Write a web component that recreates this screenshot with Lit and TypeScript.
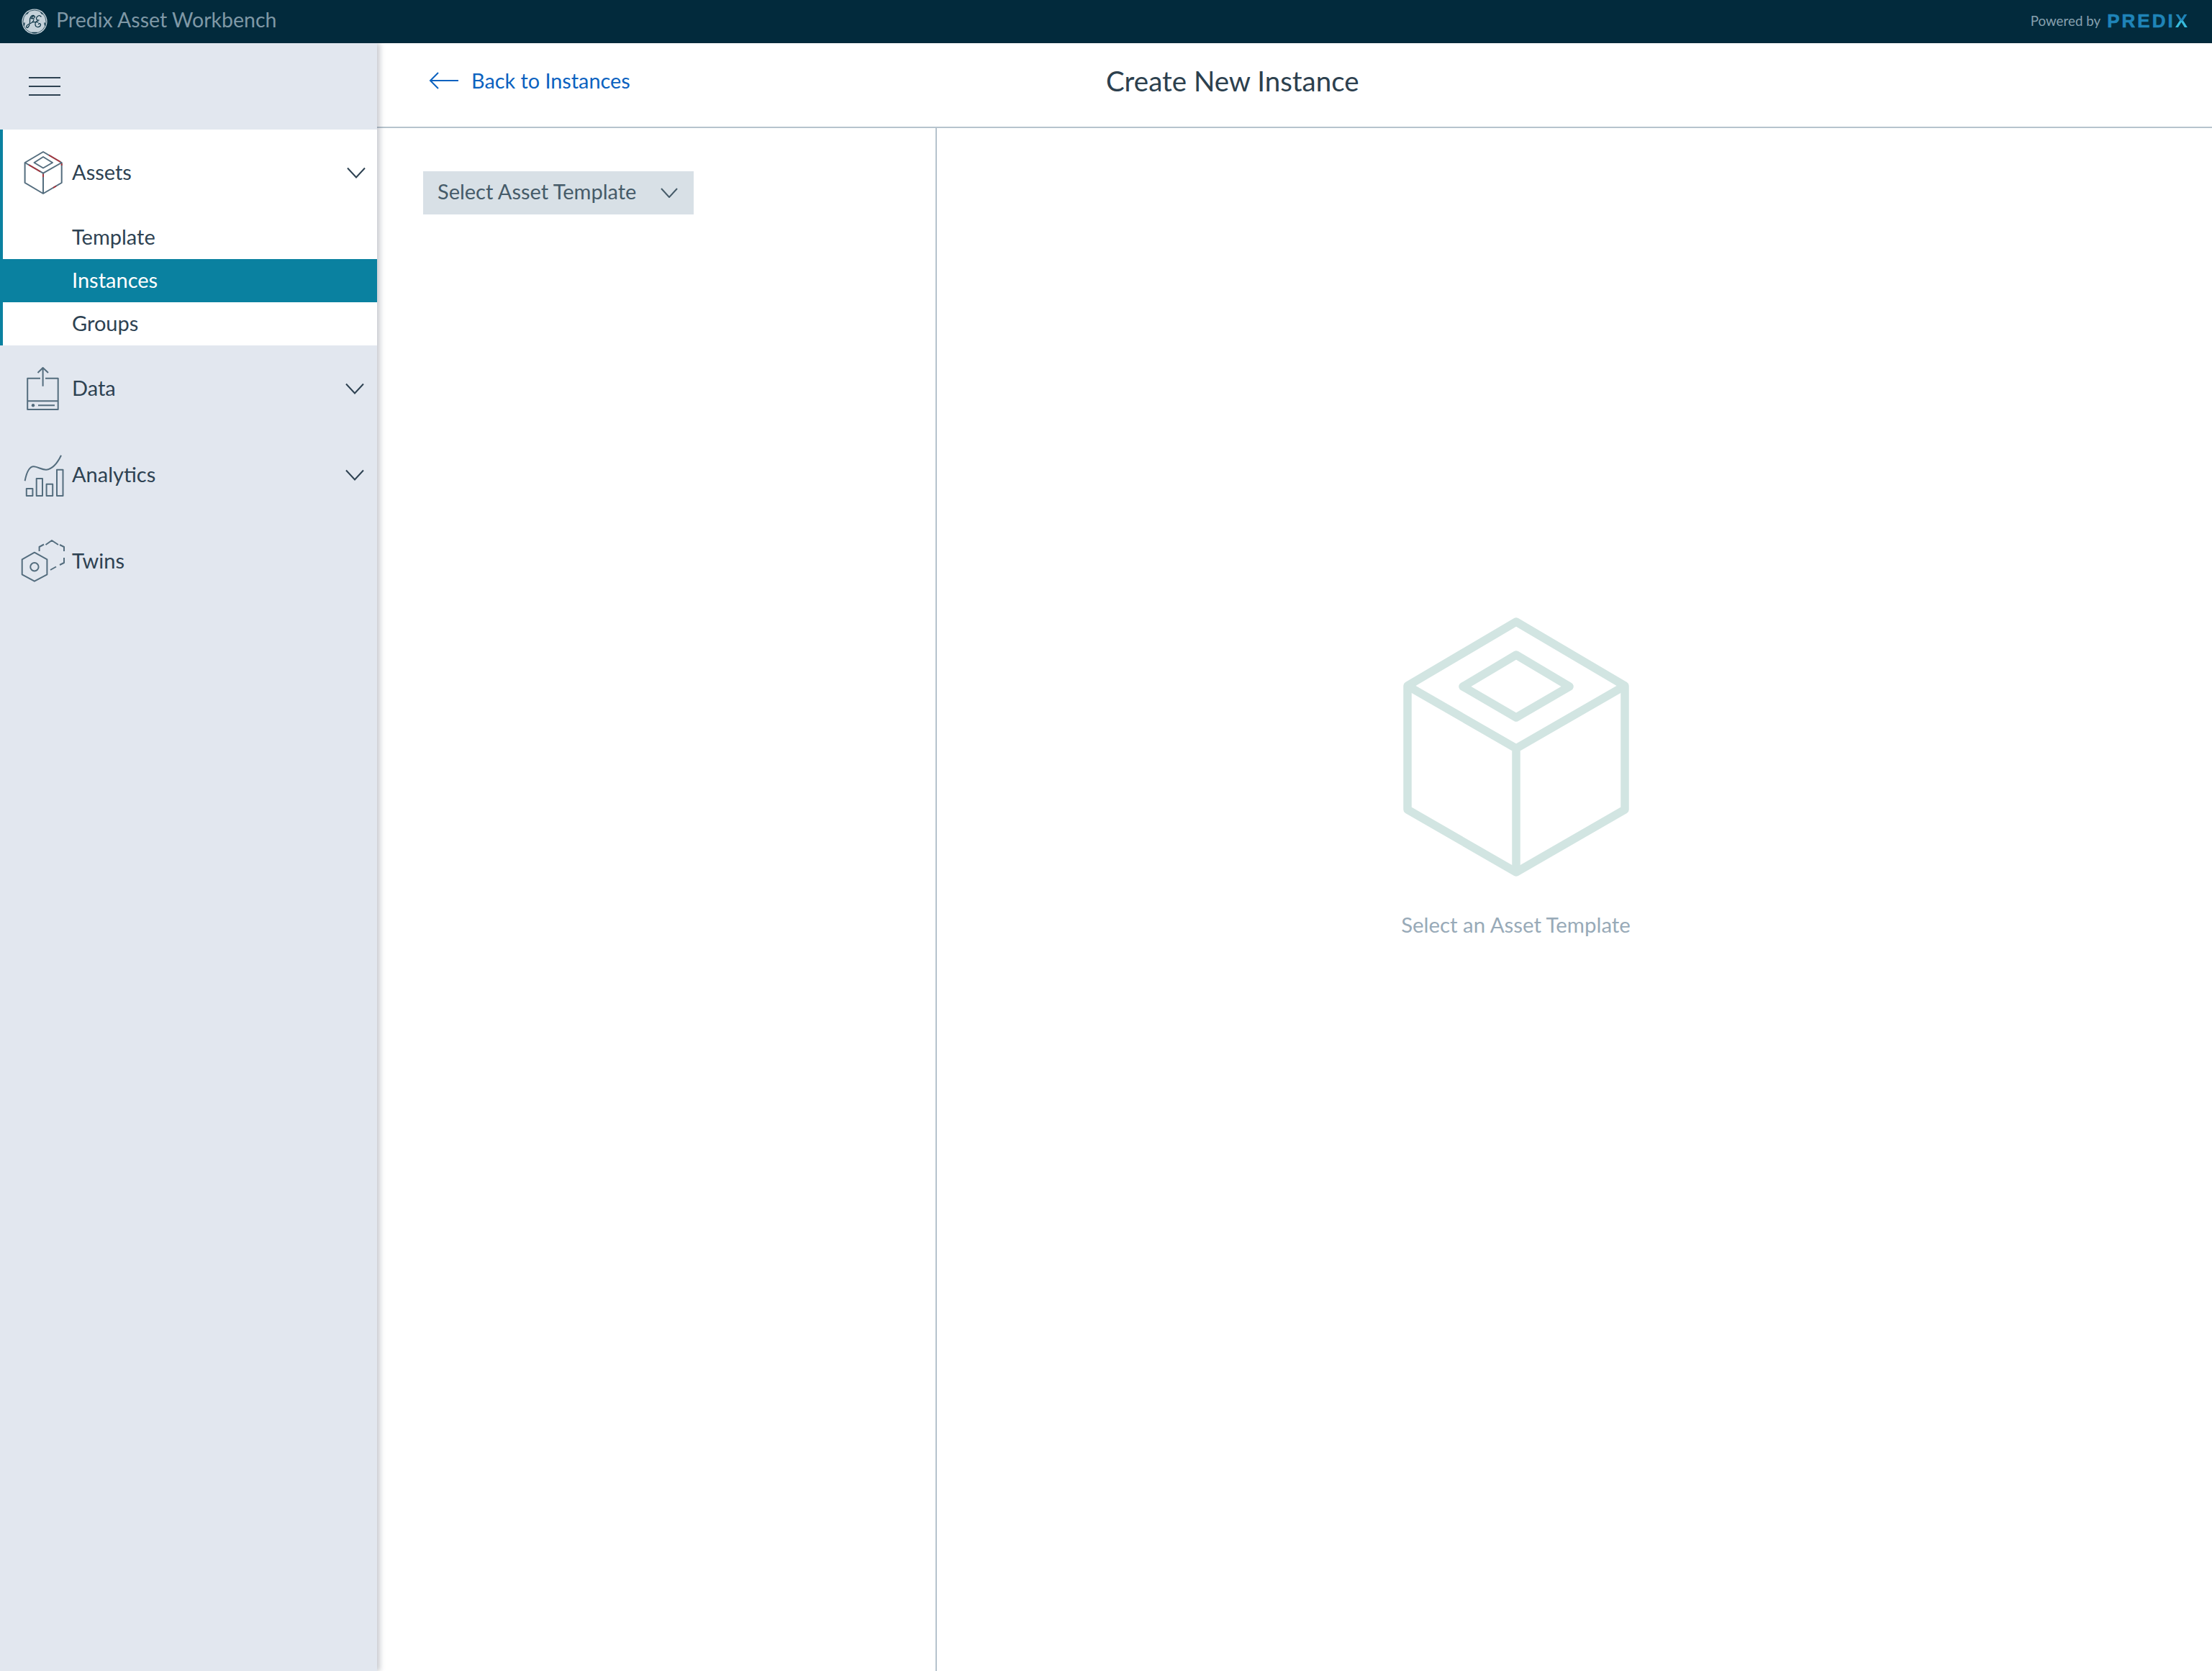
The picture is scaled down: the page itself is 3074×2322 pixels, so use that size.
import { LitElement, html, css, svg } from 'lit';
import { customElement } from 'lit/decorators.js';

const chevron = html`<svg class="chev" viewBox="0 0 26 16"><path d="M1 1.5 13 14.5 25 1.5"/></svg>`;

const assetsIcon = html`<svg class="nav-icon" viewBox="28 208 66 64">
  <g class="ln">
    <path d="M60 211 85.7 226V254L60 269 34.6 254V226Z"/>
    <path d="M34.6 226 60 240.7 85.7 226M60 240.7V269"/>
    <path d="M60 218 73 226 60 233.5 47.5 226Z"/>
  </g>
  <g class="red">
    <path d="M68 215.5 84 225M85.7 227V230M40 229 56 238.5M60 241.7V246M78 258.500 74 261"/>
  </g>
</svg>`;

const dataIcon = html`<svg class="nav-icon" viewBox="28 508 66 64">
  <g class="ln">
    <path d="M56 525.7H38.2V569H80.7V525.7H63M38.2 557.3H80.7M59.6 536.7V511M52.5 518 59.6 511 67 518M53 563.3H76"/>
    <circle class="dot" cx="46" cy="563.3" r="2.2"/>
  </g>
</svg>`;

const analyticsIcon = html`<svg class="nav-icon" viewBox="28 628 66 64">
  <g class="ln">
    <path d="M34.6 668.3C37 656 41 648 47 648.3 53 648.6 58 653 64.3 652.7 72 652 79 645 85 632.7"/>
    <path d="M36.8 679H45.4V689H36.8ZM50.7 665H59V689H50.7ZM64.6 672.7H73.2V689H64.6ZM79 652.7H87.5V689H79Z"/>
  </g>
</svg>`;

const twinsIcon = html`<svg class="nav-icon" viewBox="28 748 66 64">
  <g class="ln">
    <path d="M47.9 767.7 65.4 777.3V798.3L47.9 807.7 30.7 798.3V777.3Z"/>
    <circle cx="47.9" cy="787.7" r="5.7"/>
    <path d="M63.5 757 72 751 81 757M54.6 766V760L61 756.5M83 757 89 760V766M89 775V782L83 785M78 787.5 70 792"/>
  </g>
</svg>`;

// rough hand drawn GE monogram, logo only
const geLogo = svg`<circle cx="18" cy="18" r="17.6" fill="#c5d2da"/>
  <circle cx="18" cy="18" r="16" fill="none" stroke="#022a3c" stroke-width=".7"/>
  <g fill="none" stroke="#0b3345" stroke-width="1.25" stroke-linecap="round">
    <path d="M17 9.5C13.5 8.5 11 13 11.5 17 12 21 10 26.5 7.5 26.5 5.5 26 7 22.5 10 21.5 13 20.5 16.5 18 17 15"/>
    <path d="M14 12.5C15.5 10.5 17.5 9.5 18.5 11 19 13 15 14.5 13 13.5"/>
    <path d="M27 11C25 8.5 21 10 20.5 13.5 20.3 15.5 22.5 16.5 24.5 16 21 16.5 18.5 19 19 22.5 19.5 26 24 26.5 26 24 27.5 21.5 25 19.5 23.5 21.5"/>
    <path d="M15 18.5H23"/>
  </g>
  <g stroke="#0b3345" stroke-width="1.4" stroke-linecap="round">
    <path d="M9 5.5 7 7.5M27 5.5 29 7.5M4 20 3.5 23M32 20 32.5 23M15 33.5H21"/>
  </g>`;

@customElement('app-root')
export class AppRoot extends LitElement {
  static styles = css`
    :host {
      display: flex;
      flex-direction: column;
      height: 100vh;
      overflow: hidden;
      background: #fff;
      color: #2e4252;
      font-family: 'Lato', 'Noto Sans', sans-serif;
      font-size: 29px;
    }

    .topbar {
      flex: none;
      height: 60px;
      display: flex;
      align-items: center;
      padding: 0 34px 0 30px;
      background: #022a3c;
      position: relative;
      z-index: 2;
    }
    .ge {
      width: 36px;
      height: 36px;
      margin-right: 12px;
    }
    .app-name {
      font-size: 28.5px;
      color: #7f98a6;
      padding-bottom: 7px;
    }
    .powered {
      margin-left: auto;
      display: flex;
      align-items: center;
      gap: 9px;
      font-size: 18.8px;
      color: #86a0ae;
      padding-bottom: 1px;
    }
    .powered > span:first-child {
      padding-bottom: 2px;
    }
    .predix {
      font-family: 'Liberation Sans', sans-serif;
      font-weight: 700;
      font-size: 26px;
      letter-spacing: 3px;
      color: #1f84b8;
      -webkit-text-stroke: 0.6px #1f84b8;
    }
    .predix .x {
      letter-spacing: 0;
      background: linear-gradient(#1f84b8 45%, #38bcdc 55%);
      -webkit-background-clip: text;
      background-clip: text;
      color: transparent;
      -webkit-text-stroke: 0;
    }

    .body {
      flex: 1;
      display: flex;
      min-height: 0;
    }

    .sidebar {
      flex: none;
      width: 524px;
      background: #e2e7ef;
      box-shadow: 4px 0 7px rgba(60, 70, 85, 0.28);
      position: relative;
      z-index: 1;
    }
    .burger {
      height: 120px;
      display: flex;
      flex-direction: column;
      justify-content: center;
      gap: 10px;
      padding-left: 40px;
    }
    .burger span {
      width: 44px;
      height: 2px;
      background: #2e4252;
    }
    .group.open {
      background: #fff;
      border-left: 4px solid #0a81a0;
    }
    .group.open .nav {
      padding-left: 24px;
      padding-right: 16px;
    }
    .nav {
      height: 120px;
      display: flex;
      align-items: center;
      padding: 0 18px 0 28px;
    }
    .nav > span {
      padding-bottom: 4px;
    }
    .nav-icon {
      width: 66px;
      height: 64px;
      margin-right: 6px;
      overflow: visible;
      flex: none;
    }
    .ln {
      fill: none;
      stroke: #546d7e;
      stroke-width: 2;
      stroke-linejoin: round;
    }
    .ln .dot {
      fill: #546d7e;
      stroke: none;
    }
    .red {
      fill: none;
      stroke: #a9343c;
      stroke-width: 1.8;
    }
    .chev {
      width: 26px;
      height: 16px;
      margin-left: auto;
      fill: none;
      stroke: #2e4252;
      stroke-width: 2;
    }
    .sub {
      height: 60px;
      box-sizing: border-box;
      display: flex;
      align-items: center;
      padding: 0 0 4px 96px;
    }
    .sub.active {
      margin-left: -4px;
      padding-left: 100px;
      background: #0a81a0;
      color: #fff;
    }

    .main {
      flex: 1;
      display: flex;
      flex-direction: column;
      min-width: 0;
    }
    .toolbar {
      flex: none;
      height: 118px;
      box-sizing: border-box;
      display: flex;
      align-items: center;
      padding-bottom: 13px;
      border-bottom: 2px solid #b6c3cd;
    }
    .back {
      width: 1013px;
      box-sizing: border-box;
      padding-left: 72px;
      display: flex;
      align-items: center;
      gap: 18px;
      font-size: 28.8px;
      color: #0b62c0;
    }
    .back svg {
      width: 41px;
      height: 24px;
      fill: none;
      stroke: #0b62c0;
      stroke-width: 2;
    }
    .title {
      font-size: 38.5px;
      color: #2c404e;
    }

    .panes {
      flex: 1;
      display: flex;
      min-height: 0;
    }
    .left {
      flex: none;
      width: 778px;
      padding: 60px 0 0 64px;
      box-sizing: border-box;
      border-right: 2px solid #b6c3cd;
    }
    .select {
      width: 376px;
      height: 60px;
      box-sizing: border-box;
      display: flex;
      align-items: center;
      padding: 0 22px 0 20px;
      background: #d8e0e6;
      color: #465b69;
    }
    .select span {
      padding-bottom: 6px;
    }
    .select svg {
      width: 24px;
      height: 14px;
      margin-left: auto;
      fill: none;
      stroke: #465b69;
      stroke-width: 2;
    }
    .right {
      flex: 1;
      display: flex;
      flex-direction: column;
      align-items: center;
      padding: 678px 163px 0 0;
    }
    .cube {
      width: 320px;
      height: 364px;
      fill: none;
      stroke: #d2e5e2;
      stroke-width: 11.5;
      stroke-linejoin: round;
    }
    .hint {
      margin-top: 47px;
      font-size: 29.4px;
      color: #98aab8;
    }
  `;

  render() {
    return html`
      <header class="topbar">
        <svg class="ge" viewBox="0 0 36 36">${geLogo}</svg>
        <span class="app-name">Predix Asset Workbench</span>
        <div class="powered">
          <span>Powered by</span>
          <span class="predix">PREDI<span class="x">X</span></span>
        </div>
      </header>
      <div class="body">
        <nav class="sidebar">
          <div class="burger"><span></span><span></span><span></span></div>
          <div class="group open">
            <div class="nav">${assetsIcon}<span>Assets</span>${chevron}</div>
            <div class="sub">Template</div>
            <div class="sub active">Instances</div>
            <div class="sub">Groups</div>
          </div>
          <div class="nav">${dataIcon}<span>Data</span>${chevron}</div>
          <div class="nav">${analyticsIcon}<span>Analytics</span>${chevron}</div>
          <div class="nav">${twinsIcon}<span>Twins</span></div>
        </nav>
        <section class="main">
          <div class="toolbar">
            <a class="back">
              <svg viewBox="0 0 41 24"><path d="M41 12H2M13 1 2 12 13 23"/></svg>
              <span>Back to Instances</span>
            </a>
            <div class="title">Create New Instance</div>
          </div>
          <div class="panes">
            <div class="left">
              <div class="select">
                <span>Select Asset Template</span>
                <svg viewBox="0 0 24 14"><path d="M1 1 12 13 23 1"/></svg>
              </div>
            </div>
            <div class="right">
              <svg class="cube" viewBox="1947 856 320 364">
                <path d="M2107 864 2258 953V1125L2107 1212 1956 1125V953Z"/>
                <path d="M1956 953 2107 1040 2258 953M2107 1040V1212"/>
                <path d="M2107 910 2181 954 2107 997 2033 954Z"/>
              </svg>
              <div class="hint">Select an Asset Template</div>
            </div>
          </div>
        </section>
      </div>
    `;
  }
}
